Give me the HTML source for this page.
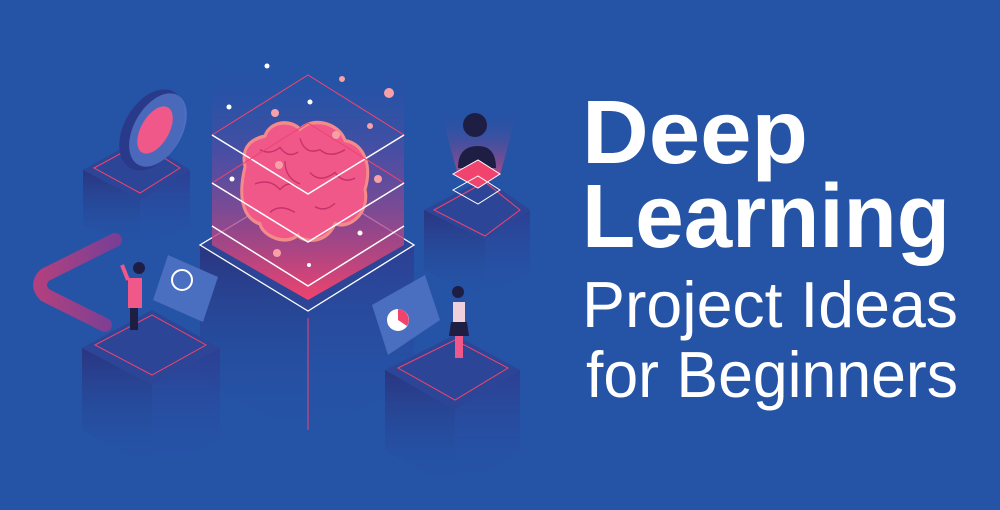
<!DOCTYPE html>
<html><head><meta charset="utf-8"><style>
html,body{margin:0;padding:0;background:#2553a6;}
svg{display:block}
</style></head><body>
<svg width="1000" height="510" viewBox="0 0 1000 510" xmlns="http://www.w3.org/2000/svg">
<defs>
<linearGradient id="glow" x1="0" y1="0" x2="0" y2="1">
<stop offset="0" stop-color="#2553a6" stop-opacity="0"/>
<stop offset="0.4" stop-color="#6a4aa0" stop-opacity="0.6"/>
<stop offset="1" stop-color="#f0436e"/>
</linearGradient>
<linearGradient id="pillar" x1="0" y1="0" x2="0" y2="1">
<stop offset="0" stop-color="#2a3580"/>
<stop offset="1" stop-color="#2553a6" stop-opacity="0"/>
</linearGradient>
<linearGradient id="pillar2" x1="0" y1="0" x2="0" y2="1">
<stop offset="0" stop-color="#2d3f93"/>
<stop offset="1" stop-color="#2553a6" stop-opacity="0"/>
</linearGradient>
<linearGradient id="road" x1="0" y1="0" x2="1" y2="0">
<stop offset="0" stop-color="#b0407f"/>
<stop offset="1" stop-color="#7a3f95"/>
</linearGradient>
<linearGradient id="beam" x1="0" y1="0" x2="0" y2="1">
<stop offset="0" stop-color="#2553a6" stop-opacity="0"/>
<stop offset="1" stop-color="#e0457a"/>
</linearGradient>
</defs>

<polygon points="200,245 308,311 308,440 200,380" fill="url(#pillar)"/>
<polygon points="308,311 414,245 414,380 308,440" fill="url(#pillar2)"/>
<polygon points="200,245 308,180 414,245 308,311" fill="#2d4596"/>
<polygon points="200,245 308,311 414,245 308,180" fill="none" stroke="#fff" stroke-width="1.3"/>
<line x1="308" y1="318" x2="308" y2="430" stroke="#f0436e" stroke-width="1"/>
<polygon points="212,65 404,65 404,245 308,300 212,245" fill="url(#glow)"/>
<g transform="matrix(1,0,0,1.14,0,1.5)">
<path d="M245,145 C240,125 255,120 265,118 C270,105 290,103 300,112 C315,100 340,108 345,122 C365,125 372,145 365,165 C370,185 350,200 335,195 C325,215 300,210 298,205 C285,215 262,205 260,195 C242,190 238,170 245,145 Z" fill="#f0588a" stroke="#f48a8a" stroke-width="3"/>
<g fill="none" stroke="#c8326a" stroke-width="1.3">
<path d="M260,130 q10,5 20,-2 q8,10 18,4"/><path d="M300,120 q5,15 20,10 q10,8 25,0"/>
<path d="M255,160 q15,-5 25,5 q10,-10 20,0"/><path d="M310,150 q10,10 25,0 q8,10 20,5"/>
<path d="M270,185 q10,-8 25,0"/><path d="M315,180 q10,5 20,-3"/><path d="M285,140 q0,15 15,20"/>
</g>
</g>
<polygon points="212,135 308,75 404,135 308,194" fill="none" stroke="#f0436e" stroke-width="1"/>
<polyline points="212,135 308,194 404,135" fill="none" stroke="#fff" stroke-width="1.5"/>
<polygon points="212,183 308,123 404,183 308,242" fill="none" stroke="#f0436e" stroke-width="1"/>
<polyline points="212,183 308,242 404,183" fill="none" stroke="#fff" stroke-width="1.5"/>
<polyline points="212,226 308,286 404,226" fill="none" stroke="#fff" stroke-width="1.5"/>
<g fill="#fff"><circle cx="267" cy="66" r="2.5"/><circle cx="229" cy="107" r="2.5"/><circle cx="310" cy="102" r="2.5"/><circle cx="232" cy="179" r="2.5"/><circle cx="360" cy="233" r="2.5"/><circle cx="309" cy="265" r="2"/></g>
<g fill="#f8a0a8"><circle cx="342" cy="79" r="3"/><circle cx="389" cy="93" r="5"/><circle cx="275" cy="113" r="4"/><circle cx="370" cy="126" r="3"/><circle cx="336" cy="135" r="4"/><circle cx="279" cy="165" r="4"/><circle cx="378" cy="179" r="4"/><circle cx="277" cy="253" r="4"/></g>

<polygon points="83,170 140,138 190,170 140,200" fill="#2d4596"/>
<polygon points="83,170 140,200 140,250 83,225" fill="url(#pillar)"/>
<polygon points="140,200 190,170 190,225 140,250" fill="url(#pillar2)"/>
<polygon points="94,168 140,143 180,168 140,193" fill="none" stroke="#f0436e"/>
<ellipse cx="152" cy="130" rx="28" ry="44" transform="rotate(30 152 130)" fill="#2a3a8a"/>
<ellipse cx="158" cy="130" rx="24" ry="40" transform="rotate(30 158 130)" fill="#5a7ed0" opacity="0.7"/>
<ellipse cx="155" cy="130" rx="14" ry="26" transform="rotate(30 155 130)" fill="#f0588a"/>
<path d="M115,240 L45,275 Q35,285 45,295 L105,325" fill="none" stroke="url(#road)" stroke-width="14" stroke-linecap="round"/>
<polygon points="82,348 152,310 220,348 152,385" fill="#2d4596"/>
<polygon points="82,348 152,385 152,470 82,430" fill="url(#pillar)"/>
<polygon points="152,385 220,348 220,440 152,470" fill="url(#pillar2)"/>
<polygon points="95,345 152,315 206,345 152,375" fill="none" stroke="#f0436e"/>
<polygon points="168,255 218,277 203,322 153,300" fill="#4a6ec0"/>
<circle cx="182" cy="280" r="10" fill="none" stroke="#fff" stroke-width="2"/>
<rect x="130" y="305" width="8" height="25" fill="#1e1e45"/>
<path d="M128,278 h14 v30 h-14 z" fill="#f0588a"/>
<circle cx="139" cy="268" r="6" fill="#1e1e45"/>
<line x1="128" y1="280" x2="122" y2="265" stroke="#f0588a" stroke-width="4"/>
<polygon points="424,210 485,178 530,210 485,240" fill="#2d4596"/>
<polygon points="424,210 485,240 485,300 424,270" fill="url(#pillar)"/>
<polygon points="485,240 530,210 530,270 485,300" fill="url(#pillar2)"/>
<polygon points="434,210 485,182 520,210 485,236" fill="none" stroke="#f0436e"/>
<polygon points="440,110 518,110 500,175 458,175" fill="url(#beam)" opacity="0.7"/>
<circle cx="475" cy="125" r="12" fill="#1e1e45"/>
<path d="M458,168 q0,-22 20,-22 q18,0 18,22 z" fill="#1e1e45"/>
<polygon points="453,174 478,160 500,174 478,188" fill="#f0436e" stroke="#fff"/>
<polygon points="453,190 478,176 500,190 478,204" fill="none" stroke="#fff"/>
<polygon points="385,370 455,335 520,370 455,410" fill="#2d4596"/>
<polygon points="385,370 455,410 455,490 385,450" fill="url(#pillar)"/>
<polygon points="455,410 520,370 520,450 455,490" fill="url(#pillar2)"/>
<polygon points="398,368 455,340 508,368 455,400" fill="none" stroke="#f0436e"/>
<polygon points="372,305 425,275 440,320 388,355" fill="#4a6ec0"/>
<circle cx="398" cy="320" r="11" fill="#fff"/>
<path d="M398,320 v-11 a11,11 0 0 1 9,17 z" fill="#f0436e"/>
<circle cx="458" cy="292" r="6" fill="#1e1e45"/>
<rect x="453" y="302" width="12" height="22" fill="#f0d0dc"/>
<path d="M451,322 h16 l2,14 h-20 z" fill="#1e1e45"/>
<rect x="455" y="336" width="8" height="22" fill="#f0588a"/>

<text x="582" y="163" fill="#fff" font-family="Liberation Sans, sans-serif" font-weight="bold" font-size="90" textLength="226" lengthAdjust="spacingAndGlyphs">Deep</text>
<text x="582" y="247" fill="#fff" font-family="Liberation Sans, sans-serif" font-weight="bold" font-size="90" textLength="368" lengthAdjust="spacingAndGlyphs">Learning</text>
<text x="582" y="327" fill="#fff" font-family="Liberation Sans, sans-serif" font-size="65" textLength="376" lengthAdjust="spacingAndGlyphs">Project Ideas</text>
<text x="586" y="397" fill="#fff" font-family="Liberation Sans, sans-serif" font-size="65" textLength="372" lengthAdjust="spacingAndGlyphs">for Beginners</text>
</svg>
</body></html>
